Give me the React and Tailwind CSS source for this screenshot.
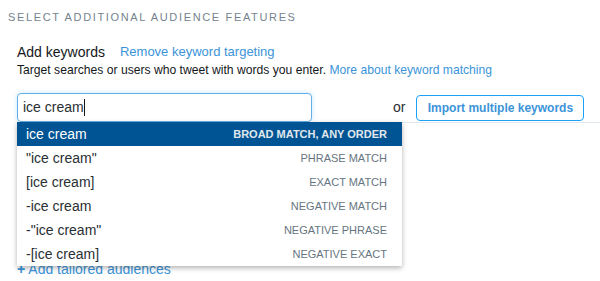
import React from 'react';

const options = [
  { text: 'ice cream', label: 'BROAD MATCH, ANY ORDER', active: true },
  { text: '"ice cream"', label: 'PHRASE MATCH' },
  { text: '[ice cream]', label: 'EXACT MATCH' },
  { text: '-ice cream', label: 'NEGATIVE MATCH' },
  { text: '-"ice cream"', label: 'NEGATIVE PHRASE' },
  { text: '-[ice cream]', label: 'NEGATIVE EXACT' },
];

const App = () => {
  return (
    <div className="relative w-[600px] h-[281px] overflow-hidden bg-white font-['Liberation_Sans',Arial,sans-serif] text-[#292f33]">
      {/* Section title */}
      <div className="pl-2 pt-[11px] text-[11px] leading-[13px] tracking-[1.65px] text-[#75838e]">
        SELECT ADDITIONAL AUDIENCE FEATURES
      </div>

      <div className="pl-[17px] pt-5">
        <div className="flex items-center text-[14px] leading-4">
          <span className="text-[#14171a]">Add keywords</span>
          <a className="ml-[15px] text-[13px] text-[#3b94d9]">Remove keyword targeting</a>
        </div>
        <p className="text-[12.15px] leading-4 text-[#14171a] mt-[2px]">
          Target searches or users who tweet with words you enter.{' '}
          <a className="text-[#3b94d9]">More about keyword matching</a>
        </p>

        {/* Input row */}
        <div className="flex items-center mt-[15px] h-[30px] border-b border-[#e1e8ed]">
          <div className="w-[295px] h-[29px] self-start flex items-center px-[5px] border border-[#62aee6] rounded-[4px] shadow-[0_0_5px_rgba(29,161,242,0.25)] text-[14px]">
            <span>ice cream</span>
            <span className="w-px h-[17px] bg-[#14171a]" />
          </div>
          <span className="ml-[81px] text-[14px] text-[#292f33]">or</span>
          <button className="ml-[11px] w-[168px] h-[26px] border border-[#1da1f2] rounded-[4px] text-[12px] font-bold text-[#3b94d9]">
            Import multiple keywords
          </button>
        </div>

        <div className="mt-[138px] text-[14px] leading-4 text-[#3b94d9]">
          <span className="font-bold">+</span> Add tailored audiences
        </div>
      </div>

      {/* Suggestions dropdown */}
      <ul className="absolute left-[17px] top-[122px] w-[385px] bg-white shadow-[0_2px_5px_rgba(0,0,0,0.3)]">
        {options.map((o) => (
          <li
            key={o.label}
            className={
              o.active
                ? 'flex items-center justify-between h-6 pl-[9px] pr-[15px] bg-[#005493] text-white'
                : 'flex items-center justify-between h-6 pl-[9px] pr-[15px] text-[#292f33]'
            }
          >
            <span className="text-[14px]">{o.text}</span>
            <span className={o.active ? 'text-[11px] font-bold text-[#e1e8ed]' : 'text-[11px] text-[#66757f]'}>
              {o.label}
            </span>
          </li>
        ))}
      </ul>
    </div>
  );
};

export default App;
